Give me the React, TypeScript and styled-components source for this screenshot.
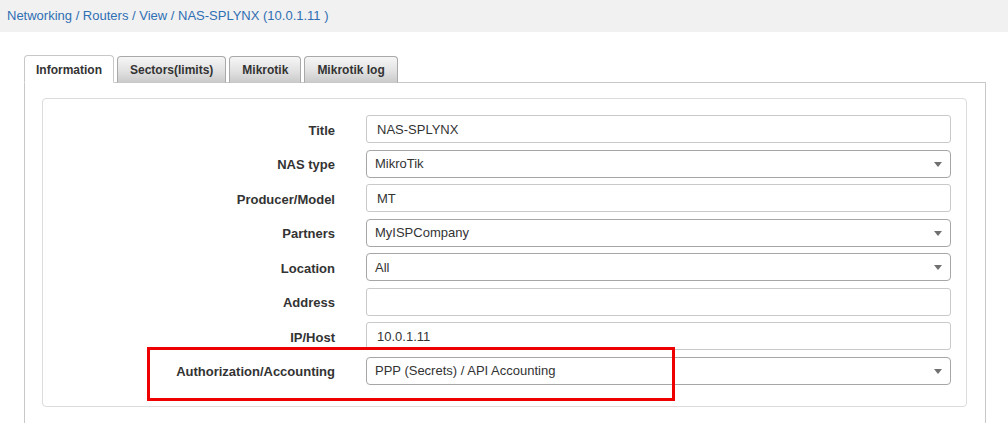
import React from "react";
import styled, { createGlobalStyle } from "styled-components";

const Global = createGlobalStyle`
  html, body { margin: 0; padding: 0; background: #fff; overflow: hidden; }
  body { font-family: "Liberation Sans", Arial, Helvetica, sans-serif; color: #333; }
  * { box-sizing: border-box; }
`;

const Header = styled.div`
  height: 32px;
  background: #f1f1f1;
  display: flex;
  align-items: center;
  padding: 0 0 2px 7px;
  font-size: 13px;
  color: #2f6fb3;
`;

const Main = styled.div`
  padding: 24px 22px 0 24px;
`;

const TabList = styled.div`
  display: flex;
  align-items: flex-end;
  gap: 3px;
  height: 27px;
  position: relative;
  z-index: 1;
  margin-bottom: -1px;
`;

const Tab = styled.div<{ $active?: boolean }>`
  height: ${(p) => (p.$active ? "28px" : "27px")};
  padding: 1px ${(p) => (p.$active ? "11px" : "12px")} 0;
  display: flex;
  align-items: center;
  justify-content: center;
  font-size: 12px;
  font-weight: bold;
  color: #333;
  border: 1px solid ${(p) => (p.$active ? "#c8c8c8" : "#a9a9a9")};
  border-bottom: ${(p) => (p.$active ? "1px solid #fff" : "1px solid #c8c8c8")};
  border-radius: 4px 4px 0 0;
  background: ${(p) =>
    p.$active ? "#fff" : "linear-gradient(to bottom, #f6f6f6 0%, #e2e2e2 55%, #cbcbcb 100%)"};
`;

const Pane = styled.div`
  border: 1px solid #c8c8c8;
  border-bottom: none;
  padding: 15px 18px 0 17px;
  height: 341px;
`;

const Panel = styled.div`
  border: 1px solid #dcdcdc;
  border-radius: 4px;
  padding: 16px 15px 21px 0;
  display: flex;
  flex-direction: column;
  gap: 6.5px;
`;

const Row = styled.div`
  display: flex;
  align-items: center;
  position: relative;
`;

const Label = styled.div`
  width: 292px;
  text-align: right;
  font-size: 13px;
  font-weight: bold;
  color: #333;
  margin-right: 31px;
  padding-top: 2px;
`;

const Field = styled.div<{ $select?: boolean }>`
  flex: 1;
  height: 28px;
  border: 1px solid ${(p) => (p.$select ? "#a6a6a6" : "#c9c9c9")};
  border-radius: ${(p) => (p.$select ? "4px" : "3px")};
  background: #fff;
  display: flex;
  align-items: center;
  padding-left: ${(p) => (p.$select ? "8px" : "10px")};
  padding-right: 8px;
  font-size: 13px;
  color: #333;
  position: relative;
`;

const Value = styled.span`
  flex: 1;
`;

const Arrow = styled.span`
  width: 0;
  height: 0;
  border-left: 4px solid transparent;
  border-right: 4px solid transparent;
  border-top: 5px solid #707070;
  margin-top: 1px;
`;

const Highlight = styled.div`
  position: absolute;
  left: 104px;
  top: -10px;
  width: 528px;
  height: 54px;
  border: 3px solid #ee0000;
  pointer-events: none;
`;

type F = { label: string; value: string; select?: boolean; highlight?: boolean };

const fields: F[] = [
  { label: "Title", value: "NAS-SPLYNX" },
  { label: "NAS type", value: "MikroTik", select: true },
  { label: "Producer/Model", value: "MT" },
  { label: "Partners", value: "MyISPCompany", select: true },
  { label: "Location", value: "All", select: true },
  { label: "Address", value: "" },
  { label: "IP/Host", value: "10.0.1.11" },
  { label: "Authorization/Accounting", value: "PPP (Secrets) / API Accounting", select: true, highlight: true },
];

export default function App() {
  return (
    <>
      <Global />
      <Header>Networking / Routers / View / NAS-SPLYNX (10.0.1.11 )</Header>
      <Main>
        <TabList>
          <Tab $active>Information</Tab>
          <Tab>Sectors(limits)</Tab>
          <Tab>Mikrotik</Tab>
          <Tab>Mikrotik log</Tab>
        </TabList>
        <Pane>
          <Panel>
            {fields.map((f) => (
              <Row key={f.label}>
                <Label>{f.label}</Label>
                <Field $select={f.select}>
                  <Value>{f.value}</Value>
                  {f.select && <Arrow />}
                </Field>
                {f.highlight && <Highlight />}
              </Row>
            ))}
          </Panel>
        </Pane>
      </Main>
    </>
  );
}
